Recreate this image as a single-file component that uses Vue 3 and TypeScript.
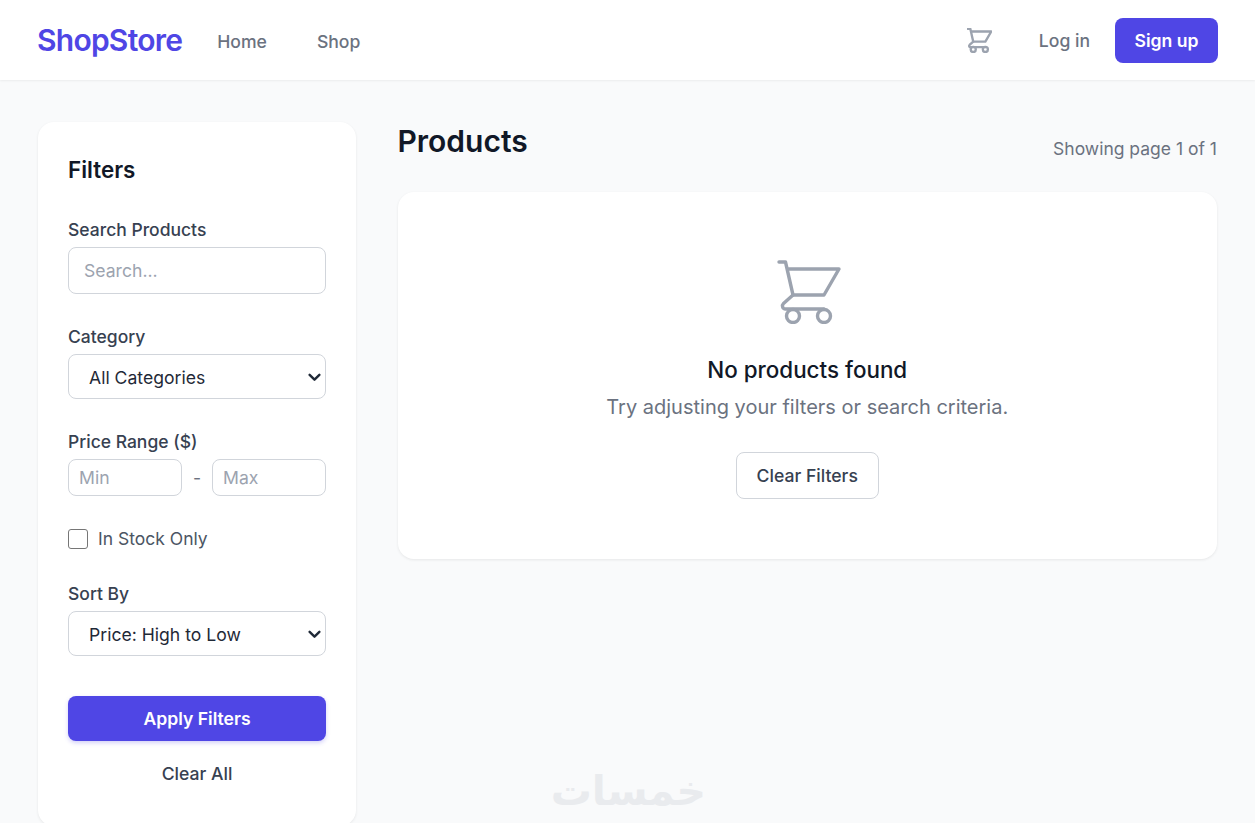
<script setup lang="ts">
const navLinks = ['Home', 'Shop']
const categories = ['All Categories']
const sortOptions = ['Price: High to Low']
</script>

<template>
  <div class="page">
    <header class="topbar">
      <div class="topbar-left">
        <span class="logo">ShopStore</span>
        <nav class="nav">
          <a v-for="link in navLinks" :key="link" class="nav-link">{{ link }}</a>
        </nav>
      </div>
      <div class="topbar-right">
        <svg class="nav-cart" viewBox="0 0 64 64" fill="none" stroke="currentColor" stroke-width="6" stroke-linecap="round" stroke-linejoin="round">
          <path d="M2 2h6.500l7.500 33M10.500 9H62L47 35H16" />
          <path d="M16 35 6.500 43.500c-2 2-1 5.500 2 5.500H47" />
          <circle cx="16" cy="55" r="6.500" />
          <circle cx="47" cy="55" r="6.500" />
        </svg>
        <a class="login">Log in</a>
        <button class="signup" type="button">Sign up</button>
      </div>
    </header>

    <div class="layout">
      <aside class="filters">
        <h2 class="filters-title">Filters</h2>

        <div class="field">
          <label class="label">Search Products</label>
          <input class="input" type="text" placeholder="Search..." />
        </div>

        <div class="field">
          <label class="label">Category</label>
          <div class="select-wrap">
            <select class="select">
              <option v-for="c in categories" :key="c">{{ c }}</option>
            </select>
            <svg class="chevron" viewBox="0 0 12 8" fill="none" stroke="currentColor" stroke-width="2.200" stroke-linecap="round" stroke-linejoin="round">
              <path d="M1.500 1.500 6 6l4.500-4.500" />
            </svg>
          </div>
        </div>

        <div class="field">
          <label class="label">Price Range ($)</label>
          <div class="range">
            <input class="input small" type="text" placeholder="Min" />
            <span class="dash">-</span>
            <input class="input small" type="text" placeholder="Max" />
          </div>
        </div>

        <label class="stock">
          <span class="check"></span>
          <span>In Stock Only</span>
        </label>

        <div class="field">
          <label class="label">Sort By</label>
          <div class="select-wrap">
            <select class="select">
              <option v-for="s in sortOptions" :key="s">{{ s }}</option>
            </select>
            <svg class="chevron" viewBox="0 0 12 8" fill="none" stroke="currentColor" stroke-width="2.200" stroke-linecap="round" stroke-linejoin="round">
              <path d="M1.500 1.500 6 6l4.500-4.500" />
            </svg>
          </div>
        </div>

        <button class="apply" type="button">Apply Filters</button>
        <button class="clear-all" type="button">Clear All</button>
      </aside>

      <main class="main">
        <div class="main-head">
          <h1 class="main-title">Products</h1>
          <span class="page-count">Showing page 1 of 1</span>
        </div>
        <section class="empty">
          <svg class="empty-cart" viewBox="0 0 64 64" fill="none" stroke="currentColor" stroke-width="3.400" stroke-linecap="round" stroke-linejoin="round">
            <path d="M2 2h6.500l7.500 33M10.500 9H62L47 35H16" />
            <path d="M16 35 6.500 43.500c-2 2-1 5.500 2 5.500H47" />
            <circle cx="16" cy="56" r="6.500" />
            <circle cx="47" cy="56" r="6.500" />
          </svg>
          <h3 class="empty-title">No products found</h3>
          <p class="empty-text">Try adjusting your filters or search criteria.</p>
          <button class="clear-filters" type="button">Clear Filters</button>
        </section>
      </main>
    </div>

    <div class="watermark" dir="rtl" lang="ar">خمسات</div>
  </div>
</template>

<style>
html,
body {
  margin: 0;
  height: 823px;
  overflow: hidden;
  background: #f9fafb;
}
</style>

<style scoped>
.page {
  position: relative;
  min-height: 823px;
  font-family: Inter, "Liberation Sans", sans-serif;
  color: #111827;
  background: #f9fafb;
}

.topbar {
  height: 80px;
  padding: 0 37px;
  display: flex;
  align-items: center;
  justify-content: space-between;
  background: #fff;
  box-shadow: 0 1px 2px rgba(0, 0, 0, 0.06);
}

.topbar-left,
.topbar-right,
.nav {
  display: flex;
  align-items: center;
}

.logo {
  font-size: 30px;
  font-weight: 600;
  letter-spacing: -0.75px;
  color: #4f46e5;
}

.nav {
  margin-left: 35px;
  gap: 50px;
  padding-top: 2px;
}

.nav-link {
  font-size: 17.600px;
  font-weight: 450;
  color: #6b7280;
}

.nav-cart {
  width: 25px;
  height: 25px;
  color: #9ca3af;
}

.login {
  margin-left: 47px;
  font-size: 17.600px;
  font-weight: 450;
  color: #6b7280;
}

.signup {
  margin-left: 25px;
  width: 103px;
  height: 45px;
  border: 0;
  border-radius: 8px;
  background: #4f46e5;
  color: #fff;
  font: 600 17.600px Inter, sans-serif;
}

.layout {
  display: flex;
  align-items: flex-start;
  gap: 41.500px;
  padding: 42px 38px 0 38px;
}

.filters {
  box-sizing: border-box;
  width: 318px;
  flex: none;
  padding: 30px;
  background: #fff;
  border-radius: 16px;
  box-shadow: 0 1px 3px rgba(0, 0, 0, 0.08);
}

.filters-title {
  margin: 0 0 30px;
  font-size: 22.400px;
  line-height: 36px;
  font-weight: 600;
}

.field {
  margin-bottom: 31px;
}

.label {
  display: block;
  margin-bottom: 5px;
  font-size: 17.500px;
  line-height: 24px;
  font-weight: 450;
  color: #374151;
}

.input,
.select {
  display: block;
  box-sizing: border-box;
  width: 100%;
  border: 1px solid #d1d5db;
  border-radius: 8px;
  background: #fff;
  font-family: Inter, sans-serif;
  font-size: 17.600px;
  color: #1f2937;
  outline: none;
}

.input {
  height: 47px;
  padding: 0 15px;
}

.input::placeholder {
  color: #9ca3af;
}

.input.small {
  flex: 1;
  width: 0;
  min-width: 0;
  height: 37px;
  padding: 0 10px;
}

.select-wrap {
  position: relative;
}

.select {
  height: 45px;
  padding: 2px 12px 0 20px;
  appearance: none;
}

.chevron {
  position: absolute;
  right: 5px;
  top: 19px;
  width: 13px;
  height: 9px;
  color: #1f2937;
  pointer-events: none;
}

.range {
  display: flex;
  align-items: center;
  gap: 10px;
}

.dash {
  width: 10px;
  text-align: center;
  color: #6b7280;
  font-size: 17.600px;
}

.stock {
  display: flex;
  align-items: center;
  gap: 10px;
  margin-bottom: 31px;
  font-size: 17.500px;
  line-height: 24px;
  color: #4b5563;
}

.check {
  box-sizing: border-box;
  width: 20px;
  height: 20px;
  border: 1px solid #767676;
  border-radius: 3px;
  background: #fff;
}

.apply {
  display: block;
  width: 100%;
  height: 45px;
  margin-top: 40px;
  border: 0;
  border-radius: 8px;
  background: #4f46e5;
  color: #fff;
  font: 600 17.600px Inter, sans-serif;
  box-shadow: 0 2px 4px rgba(79, 70, 229, 0.25);
}

.clear-all {
  display: block;
  width: 100%;
  height: 45px;
  margin-top: 10px;
  border: 0;
  background: none;
  color: #374151;
  font: 450 17.600px Inter, sans-serif;
}

.main {
  flex: 1;
  min-width: 0;
}

.main-head {
  display: flex;
  align-items: flex-end;
  justify-content: space-between;
  margin-bottom: 30px;
  height: 40px;
}

.main-title {
  margin: -1px 0 0;
  font-size: 30px;
  line-height: 40px;
  font-weight: 600;
  align-self: flex-start;
}

.page-count {
  font-size: 17.500px;
  line-height: 26px;
  color: #6b7280;
}

.empty {
  box-sizing: border-box;
  height: 367px;
  padding-top: 68px;
  display: flex;
  flex-direction: column;
  align-items: center;
  background: #fff;
  border-radius: 16px;
  box-shadow: 0 1px 3px rgba(0, 0, 0, 0.08);
}

.empty-cart {
  width: 64px;
  height: 64px;
  margin-left: 3px;
  color: #9ca3af;
}

.empty-title {
  margin: 30px 0 0;
  font-size: 22.400px;
  line-height: 32px;
  font-weight: 500;
}

.empty-text {
  margin: 6px 0 0;
  font-size: 20px;
  line-height: 30px;
  color: #6b7280;
}

.clear-filters {
  margin-top: 30px;
  width: 143px;
  height: 47px;
  flex: none;
  border: 1px solid #d1d5db;
  border-radius: 8px;
  background: #fff;
  color: #374151;
  font: 450 17.600px Inter, sans-serif;
}

.watermark {
  position: absolute;
  left: 551px;
  top: 756px;
  width: 155px;
  text-align: center;
  font-family: "DejaVu Sans", sans-serif;
  font-size: 41px;
  font-weight: 700;
  line-height: 70px;
  color: #e9ebee;
}
</style>
